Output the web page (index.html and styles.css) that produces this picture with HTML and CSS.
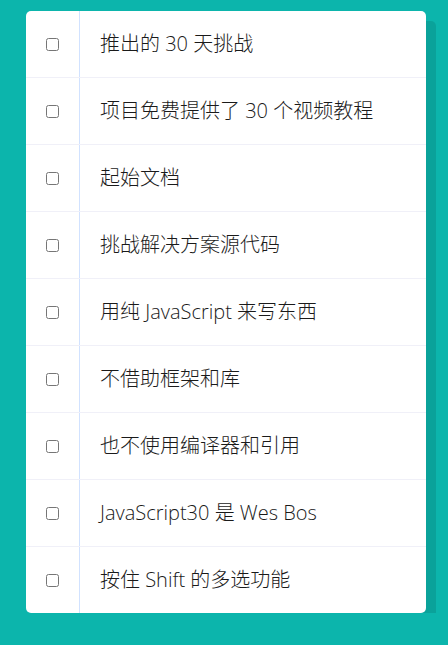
FILE: index.html
```
<!DOCTYPE html>
<html>
<head>
  <meta charset="utf-8">
  <title>Hold Shift to Check Checkboxes</title>
  <link rel="stylesheet" href="styles.css">
</head>
<body>

  <div class="inbox">
    <div class="item">
      <input type="checkbox">
      <p>推出的 30 天挑战</p>
    </div>
    <div class="item">
      <input type="checkbox">
      <p>项目免费提供了 30 个视频教程</p>
    </div>
    <div class="item">
      <input type="checkbox">
      <p>起始文档</p>
    </div>
    <div class="item">
      <input type="checkbox">
      <p>挑战解决方案源代码</p>
    </div>
    <div class="item">
      <input type="checkbox">
      <p>用纯 JavaScript 来写东西</p>
    </div>
    <div class="item">
      <input type="checkbox">
      <p>不借助框架和库</p>
    </div>
    <div class="item">
      <input type="checkbox">
      <p>也不使用编译器和引用</p>
    </div>
    <div class="item">
      <input type="checkbox">
      <p>JavaScript30 是 Wes Bos</p>
    </div>
    <div class="item">
      <input type="checkbox">
      <p>按住 Shift 的多选功能</p>
    </div>
  </div>

</body>
</html>
```

FILE: styles.css
```
html {
  background: #0cb5ac;
}
body {
  margin: 0;
  padding-top: 11px;
}
.inbox {
  width: 400px;
  margin-left: 26px;
  background: white;
  border-radius: 5px;
  box-shadow: 10px 10px 0 rgba(0, 0, 0, 0.1);
}
.item {
  display: flex;
  align-items: center;
  border-bottom: 1px solid #f0f0f8;
}
.item:last-child {
  border-bottom: 0;
}
input[type="checkbox"] {
  margin: 20px;
  width: 13px;
  height: 13px;
}
p {
  margin: 0;
  padding: 20px;
  flex: 1;
  font-family: 'Open Sans', 'Noto Sans CJK SC', sans-serif;
  font-size: 20px;
  font-weight: 300;
  line-height: 26px;
  color: #1a1a1a;
  border-left: 1px solid #d1e2ff;
}
input:checked + p {
  background: #f9f9f9;
  text-decoration: line-through;
}
```
